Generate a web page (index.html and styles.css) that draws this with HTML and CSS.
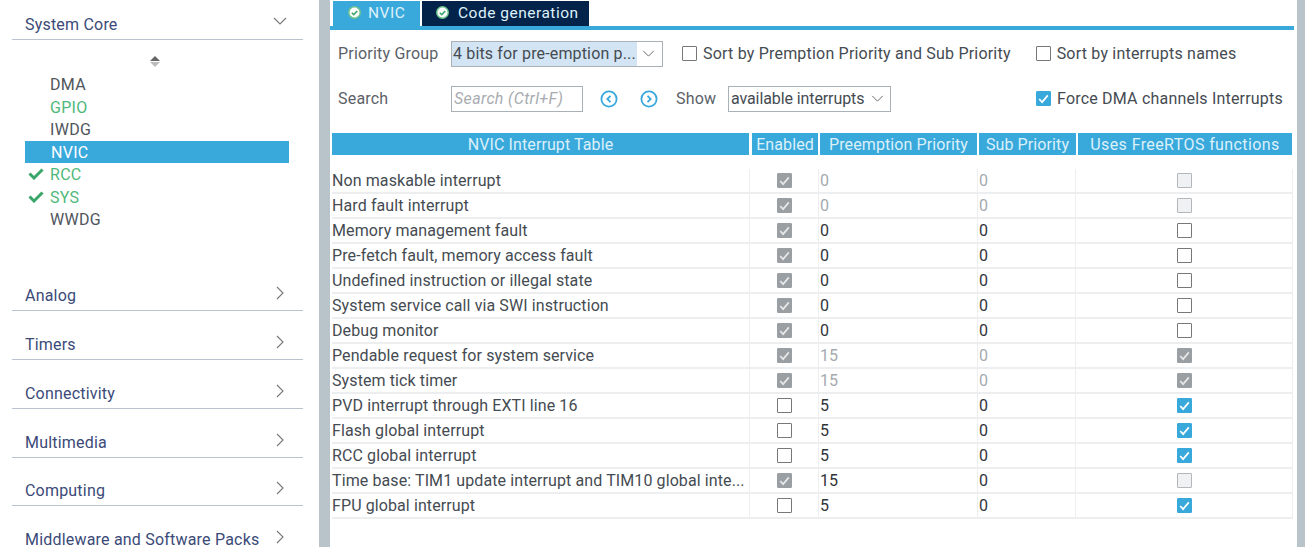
FILE: index.html
```html
<!DOCTYPE html>
<html>
<head>
  <meta charset="UTF-8">
  <title>NVIC Configuration</title>
  <link rel="stylesheet" href="styles.css">
</head>
<body>
  <svg class="defs" width="0" height="0">
    <symbol id="down" viewBox="0 0 14 8"><path d="M1 1l6 6 6-6" fill="none" stroke="currentColor" stroke-width="1.1"/></symbol>
    <symbol id="right" viewBox="0 0 8 14"><path d="M1 1l6 6-6 6" fill="none" stroke="currentColor" stroke-width="1.1"/></symbol>
    <symbol id="tick" viewBox="0 0 15 15"><path d="M3.2 8l2.9 3.1L11.8 4.4" fill="none" stroke="currentColor" stroke-width="1.7"/></symbol>
    <symbol id="ok" viewBox="0 0 12 12"><circle cx="6" cy="6" r="6" fill="#6cc48c"/><circle cx="6" cy="6" r="4.6" fill="#fff"/><path d="M3.5 6.2l1.8 1.8L8.6 4.6" fill="none" stroke="#3aa66a" stroke-width="1.5"/></symbol>
  </svg>

  <div class="sidebar">
    <div class="category first">
      <span>System Core</span>
      <svg class="chev-down"><use href="#down"/></svg>
    </div>
    <div class="sorter"><i class="up"></i><i class="dn"></i></div>
    <ul class="periph">
      <li>DMA</li>
      <li class="green">GPIO</li>
      <li>IWDG</li>
      <li class="selected">NVIC</li>
      <li class="green"><svg class="green-tick" viewBox="0 0 16 13"><path d="M1.5 6.5l4.5 4.5L14.5 2.5" fill="none" stroke="#3aa66a" stroke-width="3"/></svg>RCC</li>
      <li class="green"><svg class="green-tick" viewBox="0 0 16 13"><path d="M1.5 6.5l4.5 4.5L14.5 2.5" fill="none" stroke="#3aa66a" stroke-width="3"/></svg>SYS</li>
      <li>WWDG</li>
    </ul>
    <div class="category-list">
      <div class="category"><span>Analog</span><svg class="chev-right"><use href="#right"/></svg></div>
      <div class="category"><span>Timers</span><svg class="chev-right"><use href="#right"/></svg></div>
      <div class="category"><span>Connectivity</span><svg class="chev-right"><use href="#right"/></svg></div>
      <div class="category"><span>Multimedia</span><svg class="chev-right"><use href="#right"/></svg></div>
      <div class="category"><span>Computing</span><svg class="chev-right"><use href="#right"/></svg></div>
      <div class="category"><span>Middleware and Software Packs</span><svg class="chev-right"><use href="#right"/></svg></div>
    </div>
  </div>

  <div class="main">
    <div class="tabs">
      <div class="tab active"><svg class="ok"><use href="#ok"/></svg>NVIC</div>
      <div class="tab dark"><svg class="ok"><use href="#ok"/></svg>Code generation</div>
    </div>

    <div class="toolbar">
      <div class="tool-row">
        <label class="tool-label">Priority Group</label>
        <div class="select priority"><span class="picked">4 bits for pre-emption p...</span><svg class="chev-down"><use href="#down"/></svg></div>
        <div class="check-label sort-one"><span class="box"></span>Sort by Premption Priority and Sub Priority</div>
        <div class="check-label sort-two"><span class="box"></span>Sort by interrupts names</div>
      </div>
      <div class="tool-row">
        <label class="tool-label">Search</label>
        <div class="search">Search (Ctrl+F)</div>
        <svg class="nav prev" viewBox="0 0 18 18"><circle cx="9" cy="9" r="7.6" fill="none" stroke="#39a9dc" stroke-width="1.8"/><path d="M10.5 5.8L7.3 9l3.2 3.2" fill="none" stroke="#39a9dc" stroke-width="1.8"/></svg>
        <svg class="nav next" viewBox="0 0 18 18"><circle cx="9" cy="9" r="7.6" fill="none" stroke="#39a9dc" stroke-width="1.8"/><path d="M7.5 5.8L10.7 9l-3.2 3.2" fill="none" stroke="#39a9dc" stroke-width="1.8"/></svg>
        <span class="show-label">Show</span>
        <div class="select show">available interrupts<svg class="chev-down"><use href="#down"/></svg></div>
        <div class="check-label force"><span class="box blue"><svg><use href="#tick"/></svg></span>Force DMA channels Interrupts</div>
      </div>
    </div>

    <div class="table-head">
      <div>NVIC Interrupt Table</div>
      <div>Enabled</div>
      <div>Preemption Priority</div>
      <div>Sub Priority</div>
      <div>Uses FreeRTOS functions</div>
    </div>

    <div class="table-body">
      <div class="row"><div class="name">Non maskable interrupt</div><div class="mid"><span class="box gray"><svg><use href="#tick"/></svg></span></div><div class="num dim">0</div><div class="num dim">0</div><div class="mid"><span class="box off"></span></div></div>
      <div class="row"><div class="name">Hard fault interrupt</div><div class="mid"><span class="box gray"><svg><use href="#tick"/></svg></span></div><div class="num dim">0</div><div class="num dim">0</div><div class="mid"><span class="box off"></span></div></div>
      <div class="row"><div class="name">Memory management fault</div><div class="mid"><span class="box gray"><svg><use href="#tick"/></svg></span></div><div class="num">0</div><div class="num">0</div><div class="mid"><span class="box"></span></div></div>
      <div class="row"><div class="name">Pre-fetch fault, memory access fault</div><div class="mid"><span class="box gray"><svg><use href="#tick"/></svg></span></div><div class="num">0</div><div class="num">0</div><div class="mid"><span class="box"></span></div></div>
      <div class="row"><div class="name">Undefined instruction or illegal state</div><div class="mid"><span class="box gray"><svg><use href="#tick"/></svg></span></div><div class="num">0</div><div class="num">0</div><div class="mid"><span class="box"></span></div></div>
      <div class="row"><div class="name">System service call via SWI instruction</div><div class="mid"><span class="box gray"><svg><use href="#tick"/></svg></span></div><div class="num">0</div><div class="num">0</div><div class="mid"><span class="box"></span></div></div>
      <div class="row"><div class="name">Debug monitor</div><div class="mid"><span class="box gray"><svg><use href="#tick"/></svg></span></div><div class="num">0</div><div class="num">0</div><div class="mid"><span class="box"></span></div></div>
      <div class="row"><div class="name">Pendable request for system service</div><div class="mid"><span class="box gray"><svg><use href="#tick"/></svg></span></div><div class="num dim">15</div><div class="num dim">0</div><div class="mid"><span class="box gray"><svg><use href="#tick"/></svg></span></div></div>
      <div class="row"><div class="name">System tick timer</div><div class="mid"><span class="box gray"><svg><use href="#tick"/></svg></span></div><div class="num dim">15</div><div class="num dim">0</div><div class="mid"><span class="box gray"><svg><use href="#tick"/></svg></span></div></div>
      <div class="row"><div class="name">PVD interrupt through EXTI line 16</div><div class="mid"><span class="box"></span></div><div class="num">5</div><div class="num">0</div><div class="mid"><span class="box blue"><svg><use href="#tick"/></svg></span></div></div>
      <div class="row"><div class="name">Flash global interrupt</div><div class="mid"><span class="box"></span></div><div class="num">5</div><div class="num">0</div><div class="mid"><span class="box blue"><svg><use href="#tick"/></svg></span></div></div>
      <div class="row"><div class="name">RCC global interrupt</div><div class="mid"><span class="box"></span></div><div class="num">5</div><div class="num">0</div><div class="mid"><span class="box blue"><svg><use href="#tick"/></svg></span></div></div>
      <div class="row"><div class="name">Time base: TIM1 update interrupt and TIM10 global inte...</div><div class="mid"><span class="box gray"><svg><use href="#tick"/></svg></span></div><div class="num">15</div><div class="num">0</div><div class="mid"><span class="box off"></span></div></div>
      <div class="row"><div class="name">FPU global interrupt</div><div class="mid"><span class="box"></span></div><div class="num">5</div><div class="num">0</div><div class="mid"><span class="box blue"><svg><use href="#tick"/></svg></span></div></div>
    </div>
  </div>
</body>
</html>
```

FILE: styles.css
```css
html, body {
  height: 100%;
}
body {
  margin: 0;
  display: flex;
  height: 547px;
  overflow: hidden;
  background-color: #b9c4ca;
  font-family: Roboto, "Liberation Sans", sans-serif;
  font-size: 16px;
  color: #454b52;
}
.defs {
  position: absolute;
}

/* left panel */
.sidebar {
  width: 319px;
  flex: none;
  background-color: #fff;
  padding: 0 16px 0 12px;
  box-sizing: border-box;
  overflow: hidden;
}
.category {
  height: 48.7px;
  flex: none;
  box-sizing: border-box;
  border-bottom: 1px solid #b9c4d0;
  display: flex;
  align-items: flex-end;
  justify-content: space-between;
  padding: 0 15px 5px 13px;
  color: #3b4a78;
  letter-spacing: 0.2px;
  white-space: nowrap;
}
.category.first {
  height: 40px;
  padding-right: 16px;
}
.category-list {
  margin-top: 32.3px;
}
.chev-down {
  width: 14px;
  height: 8px;
  color: #777;
}
.category .chev-down {
  margin-bottom: 9px;
}
.chev-right {
  width: 8px;
  height: 14px;
  color: #777;
  margin: 0 4px 5px 0;
}
.sorter {
  height: 27px;
  display: flex;
  flex-direction: column;
  align-items: center;
  justify-content: flex-end;
  gap: 1px;
  padding-right: 5px;
}
.sorter i {
  width: 0;
  height: 0;
  border-left: 5px solid transparent;
  border-right: 5px solid transparent;
}
.sorter .up {
  border-bottom: 5px solid #666;
}
.sorter .dn {
  border-top: 5px solid #bbb;
}
.periph {
  list-style: none;
  margin: 6px 0 0 13px;
  padding: 0;
  width: 264px;
}
.periph li {
  height: 22.5px;
  line-height: 23.5px;
  padding-left: 25px;
  position: relative;
  letter-spacing: 0.3px;
  color: #50555c;
}
.periph .green {
  color: #4fb87a;
}
.periph .selected {
  background-color: #39a9dc;
  color: #fff;
  padding-left: 26px;
}
.green-tick {
  position: absolute;
  left: 3px;
  top: 4px;
  width: 16px;
  height: 13px;
}

/* right panel */
.main {
  width: 967px;
  margin-left: 11px;
  height: 100%;
  flex: none;
  background-color: #fff;
  padding: 1px 0 0 0;
  box-sizing: border-box;
}
.tabs {
  display: flex;
  gap: 2px;
  height: 25px;
  margin-right: 3px;
  padding-left: 3px;
  border-bottom: 4px solid #39a9dc;
}
.tab {
  display: flex;
  align-items: center;
  gap: 7px;
  padding-left: 15px;
  padding-bottom: 2px;
  font-size: 15.5px;
  letter-spacing: 0.5px;
  color: #dff1fa;
  box-sizing: border-box;
}
.tab.active {
  width: 87px;
  background-color: #39a9dc;
}
.tab.dark {
  width: 167px;
  padding-left: 14px;
  gap: 9px;
  background-color: #04234a;
}
.ok {
  width: 13px;
  height: 13px;
}
.toolbar {
  padding: 10px 0 0 8px;
  height: 99px;
  box-sizing: border-box;
  letter-spacing: 0.2px;
}
.tool-row {
  display: flex;
  align-items: center;
  height: 27px;
  margin-bottom: 18px;
  white-space: nowrap;
}
.tool-label {
  width: 113px;
  flex: none;
  color: #5c6168;
}
.select {
  height: 26px;
  box-sizing: border-box;
  border: 1px solid #a9b1b7;
  display: flex;
  align-items: center;
  justify-content: space-between;
}
.select .chev-down {
  width: 13px;
  height: 7px;
  color: #666;
}
.priority {
  width: 212px;
  padding-right: 7px;
}
.picked {
  background-color: #d3e5f4;
  width: 185px;
  height: 100%;
  line-height: 24px;
  padding-left: 1px;
  box-sizing: border-box;
  white-space: nowrap;
  letter-spacing: 0.15px;
}
.search {
  width: 132px;
  height: 26px;
  box-sizing: border-box;
  border: 1px solid #a9b1b7;
  font-style: italic;
  color: #a8acb0;
  line-height: 24px;
  padding-left: 2px;
  letter-spacing: 0.35px;
}
.nav {
  width: 18px;
  height: 18px;
  margin-left: 17px;
}
.nav.next {
  margin-left: 22px;
}
.show-label {
  margin-left: 18px;
  width: 52px;
  color: #5c6168;
}
.show {
  width: 163px;
  padding: 0 6px 0 2px;
  letter-spacing: -0.1px;
}
.check-label {
  display: flex;
  align-items: center;
  gap: 6px;
}
.sort-one {
  margin-left: 19px;
}
.sort-two {
  margin-left: 25px;
}
.force {
  margin-left: 145px;
}
.box {
  width: 15px;
  height: 15px;
  box-sizing: border-box;
  border: 1px solid #777;
  border-radius: 1px;
  display: inline-block;
  background-color: #fff;
  flex: none;
}
.box svg {
  display: block;
  width: 15px;
  height: 15px;
  margin: -1px;
}
.box.blue {
  background-color: #39a9dc;
  border-color: #39a9dc;
  color: #fff;
}
.box.gray {
  background-color: #9a9fa3;
  border-color: #9a9fa3;
  color: #e8e8e8;
}
.box.off {
  background-color: #f0f1f2;
  border-color: #b4b7ba;
}

/* interrupt table */
.table-head, .row {
  display: grid;
  margin-left: 2px;
}
.table-head {
  grid-template-columns: 420px 68px 159px 99px 216px;
  height: 22px;
  margin-top: 4px;
}
.table-head div {
  background-color: #39a9dc;
  color: #dcf0fa;
  text-align: center;
  line-height: 24px;
  margin-right: 2px;
  letter-spacing: 0.1px;
  white-space: nowrap;
  overflow: hidden;
}
.table-head div:first-child {
  margin-right: 3px;
}
.table-head div:last-child {
  letter-spacing: 0.4px;
}
.table-body {
  margin-top: 14px;
}
.row {
  grid-template-columns: 418px 69px 159px 98px 217px;
  width: 961px;
  height: 25px;
  box-sizing: border-box;
  border-bottom: 2px solid #eceef0;
}
.row > div {
  border-right: 1px solid #eceef0;
  line-height: 24px;
  box-sizing: border-box;
}
.name {
  white-space: nowrap;
  letter-spacing: 0.1px;
}
.mid {
  display: flex;
  align-items: center;
  justify-content: center;
  padding-bottom: 2px;
}
.num {
  padding-left: 1px;
  color: #30353a;
}
.num.dim {
  color: #a5aaae;
}
```
